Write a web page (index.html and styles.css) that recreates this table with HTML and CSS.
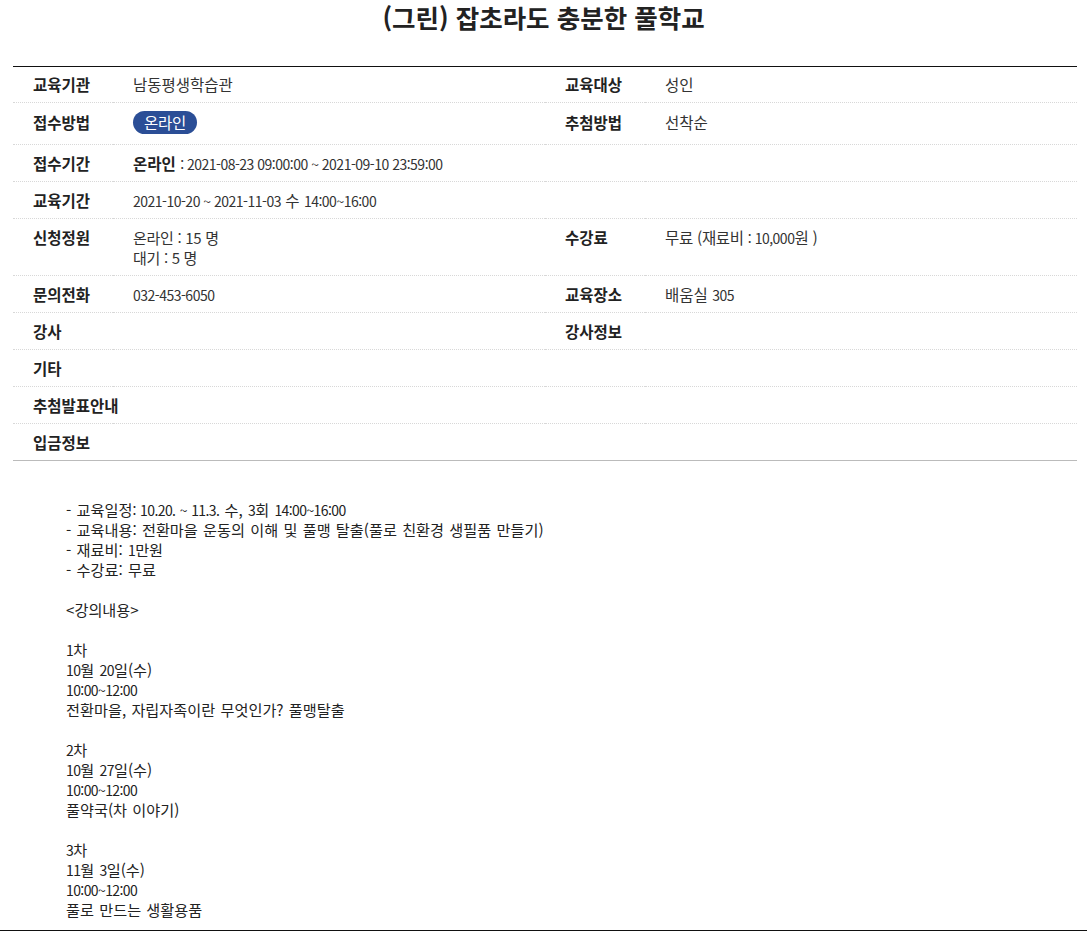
FILE: index.html
```html
<!DOCTYPE html>
<html lang="ko">
<head>
<meta charset="utf-8">
<title>(그린) 잡초라도 충분한 풀학교</title>
<link rel="stylesheet" href="styles.css">
</head>
<body>
<div class="page">
  <h1 class="title">(그린) 잡초라도 충분한 풀학교</h1>
  <div class="wrap">
    <table class="info">
      <colgroup>
        <col class="c-th"><col class="c-td"><col class="c-th"><col class="c-td">
      </colgroup>
      <tr class="r-first">
        <th>교육기관</th><td>남동평생학습관</td>
        <th>교육대상</th><td>성인</td>
      </tr>
      <tr class="r-badge">
        <th>접수방법</th><td><span class="badge">온라인</span></td>
        <th>추첨방법</th><td>선착순</td>
      </tr>
      <tr>
        <th>접수기간</th><td colspan="3"><b>온라인</b> <span class="num">: 2021-08-23 09:00:00 ~ 2021-09-10 23:59:00</span></td>
      </tr>
      <tr>
        <th>교육기간</th><td colspan="3"><span class="num">2021-10-20 ~ 2021-11-03</span> 수 <span class="num">14:00~16:00</span></td>
      </tr>
      <tr class="r-multi">
        <th>신청정원</th><td><div class="line">온라인 : 15 명</div><div class="line">대기 : 5 명</div></td>
        <th>수강료</th><td>무료 (재료비 <span class="num">: 10,000</span>원 )</td>
      </tr>
      <tr>
        <th>문의전화</th><td><span class="num">032-453-6050</span></td>
        <th>교육장소</th><td>배움실 <span class="num">305</span></td>
      </tr>
      <tr>
        <th>강사</th><td></td>
        <th>강사정보</th><td></td>
      </tr>
      <tr>
        <th>기타</th><td colspan="3"></td>
      </tr>
      <tr>
        <th class="nowrap">추첨발표안내</th><td colspan="3"></td>
      </tr>
      <tr class="r-last">
        <th>입금정보</th><td colspan="3"></td>
      </tr>
    </table>
  </div>
  <div class="content">
    <p>- 교육일정<span class="num">: 10.20. ~ 11.3.</span> 수, <span class="num">3</span>회 <span class="num">14:00~16:00</span><br>- 교육내용: 전환마을 운동의 이해 및 풀맹 탈출(풀로 친환경 생필품 만들기)<br>- 재료비: <span class="num">1</span>만원<br>- 수강료: 무료</p>
    <p>&lt;강의내용&gt;</p>
    <p><span class="num">1</span>차<br><span class="num">10</span>월 <span class="num">20</span>일(수)<br><span class="num">10:00~12:00</span><br>전환마을, 자립자족이란 무엇인가? 풀맹탈출</p>
    <p><span class="num">2</span>차<br><span class="num">10</span>월 <span class="num">27</span>일(수)<br><span class="num">10:00~12:00</span><br>풀약국(차 이야기)</p>
    <p><span class="num">3</span>차<br><span class="num">11</span>월 <span class="num">3</span>일(수)<br><span class="num">10:00~12:00</span><br>풀로 만드는 생활용품</p>
  </div>
</div>
</body>
</html>
```

FILE: styles.css
```css
html, body {
  margin: 0;
  padding: 0;
  background: #fff;
}
body {
  font-family: "Noto Sans CJK KR", "Noto Sans", "Liberation Sans", sans-serif;
  color: #222;
  font-size: 14px;
}
.page {
  width: 1087px;
}
.title {
  margin: 0;
  height: 34px;
  line-height: 34px;
  font-size: 25.5px;
  font-weight: 700;
  text-align: center;
  color: #222;
  letter-spacing: 0;
}
.wrap {
  padding: 0 10px 0 13px;
  margin-top: 32px;
}
.info {
  width: 1064px;
  border-collapse: collapse;
  border-top: 1px solid #111;
  border-bottom: 1px solid #bbb;
  table-layout: fixed;
}
.c-th { width: 100px; }
.c-td { width: 432px; }
.info th,
.info td {
  padding: 9px 0 8px 20px;
  line-height: 19px;
  font-size: 15.5px;
  text-align: left;
  vertical-align: top;
  border-bottom: 1px dotted #d8d8d8;
  letter-spacing: 0;
}
.info th {
  font-weight: 700;
  color: #222;
}
.info td {
  font-weight: 400;
  color: #333;
}
.info td b {
  font-weight: 700;
  color: #222;
}
.info tr.r-first th,
.info tr.r-first td {
  padding-top: 8px;
}
.info tr.r-badge th,
.info tr.r-badge td {
  padding-top: 10px;
  padding-bottom: 10px;
}
.info tr.r-multi td {
  padding-bottom: 8px;
  letter-spacing: -0.3px;
}
.info tr.r-multi .line {
  font-size: 15px;
  line-height: 19.5px;
}
.info tr.r-last th,
.info tr.r-last td {
  border-bottom: 1px solid #bbb;
}
.nowrap { white-space: nowrap; }
.num {
  font-size: 14px;
  line-height: 1;
  letter-spacing: -0.5px;
}
.content .num {
  letter-spacing: -0.6px;
}
.badge {
  display: inline-block;
  height: 23px;
  line-height: 22px;
  padding: 0 11px;
  border-radius: 12px;
  background: #2b4e96;
  color: #fff;
  font-size: 15.5px;
  letter-spacing: -0.3px;
  vertical-align: top;
  margin-top: -2px;
}
.content {
  margin-top: 38px;
  padding: 0 0 11px 66px;
  border-bottom: 1px solid #111;
  line-height: 20px;
  font-size: 15.2px;
  color: #222;
  letter-spacing: 0;
  word-spacing: 1px;
}
.content p {
  margin: 0 0 20px 0;
}
.content p:last-child {
  margin-bottom: 0;
}
```
